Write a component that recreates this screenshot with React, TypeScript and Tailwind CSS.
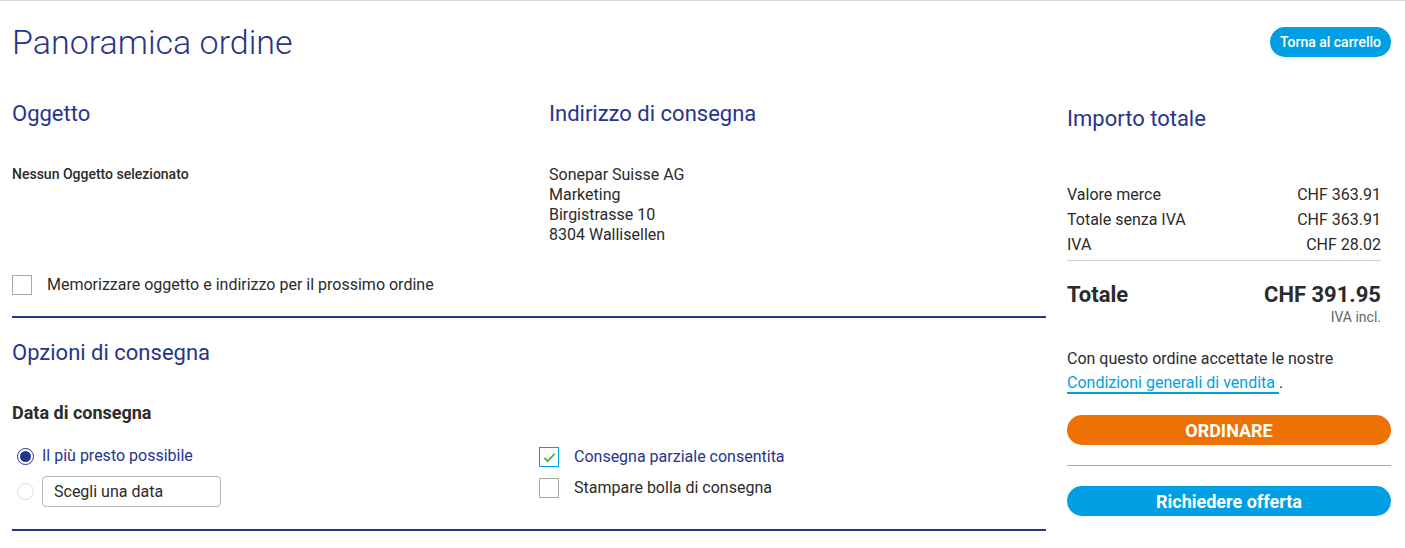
import React from "react";

const navy = "text-[#27348b]";

function Check({ checked, active }: { checked?: boolean; active?: boolean }) {
	return (
		<span
			className={`flex h-5 w-5 shrink-0 items-center justify-center border bg-white ${
				active ? "border-[#009fe3]" : "border-[#a8a8a8]"
			}`}>
			{checked && (
				<svg viewBox="0 0 16 16" className="h-[15px] w-[15px]" fill="none" stroke="#3aa935" strokeWidth="1.8">
					<path d="M2.5 8.5l3.5 3.5 7.5-8" />
				</svg>
			)}
		</span>
	);
}

function Radio({ checked }: { checked?: boolean }) {
	return (
		<span
			className={`flex h-[17px] w-[17px] shrink-0 items-center justify-center rounded-full border bg-white ${
				checked ? "border-[#27348b]" : "border-[#dcdcdc]"
			}`}>
			{checked && <span className="h-[11px] w-[11px] rounded-full bg-[#27348b]" />}
		</span>
	);
}

export default function App() {
	return (
		<div className="min-h-[548px] w-full border-t border-[#d9d9d9] bg-white pl-3 pr-[14px] font-['Roboto',sans-serif] text-[#2b2b2b]">
			<div className="flex items-start justify-between pt-[20px]">
				<h1 className={`text-[34px] font-light leading-[42px] ${navy}`}>Panoramica ordine</h1>
				<button className="mt-[6px] h-[30px] rounded-full bg-[#009fe3] px-[10px] text-[14px] font-medium text-white">
					Torna al carrello
				</button>
			</div>

			<div className="flex gap-[21px]">
				<div className="flex-1">
					<div className="grid grid-cols-2 gap-x-10 pt-[36px]">
						<div>
							<h2 className={`text-[22px] leading-[30px] ${navy}`}>Oggetto</h2>
							<p className="mt-[36px] text-[14px] font-medium leading-[18px]">Nessun Oggetto selezionato</p>
						</div>
						<div>
							<h2 className={`text-[22px] leading-[30px] ${navy}`}>Indirizzo di consegna</h2>
							<div className="mt-[36px] text-[16px] leading-[20px]">
								<p>Sonepar Suisse AG</p>
								<p>Marketing</p>
								<p>Birgistrasse 10</p>
								<p>8304 Wallisellen</p>
							</div>
						</div>
					</div>
					<label className="mt-[28px] flex items-center gap-[15px] text-[16px]">
						<Check />
						<span>Memorizzare oggetto e indirizzo per il prossimo ordine</span>
					</label>
					<div className="mt-[19px] h-[2px] bg-[#27348b]" />

					<h2 className={`mt-[20px] text-[22px] leading-[30px] ${navy}`}>Opzioni di consegna</h2>
					<h3 className="mt-[33px] text-[18px] font-bold leading-[24px]">Data di consegna</h3>
					<div className="mt-[19px] flex">
						<div className="w-[527px]">
							<div className="flex items-center gap-2 pl-[5px]">
								<Radio checked />
								<span className={`text-[16px] ${navy}`}>Il più presto possibile</span>
							</div>
							<div className="mt-[8px] flex items-center gap-2 pl-[5px]">
								<Radio />
								<input
									readOnly
									value="Scegli una data"
									className="h-[31px] w-[179px] rounded border border-[#b5b5b5] px-[11px] text-[16px] text-[#2b2b2b] outline-none"
								/>
							</div>
						</div>
						<div className="pt-[1px]">
							<label className="flex items-center gap-[15px] text-[16px]">
								<Check checked active />
								<span className={navy}>Consegna parziale consentita</span>
							</label>
							<label className="mt-[7px] flex items-center gap-[15px] text-[16px]">
								<Check />
								<span>Stampare bolla di consegna</span>
							</label>
						</div>
					</div>
					<div className="mt-[22px] h-[2px] bg-[#27348b]" />
				</div>

				<div className="w-[324px] shrink-0 pt-[41px]">
					<div className="pr-[10px]">
						<h2 className={`text-[22px] leading-[30px] ${navy}`}>Importo totale</h2>
						<div className="mt-[48px] text-[16px] leading-[25px]">
							<div className="flex justify-between">
								<span>Valore merce</span>
								<span>CHF 363.91</span>
							</div>
							<div className="flex justify-between">
								<span>Totale senza IVA</span>
								<span>CHF 363.91</span>
							</div>
							<div className="flex justify-between">
								<span>IVA</span>
								<span>CHF 28.02</span>
							</div>
						</div>
						<div className="mt-[3px] h-px bg-[#d0d0d0]" />
						<div className="mt-[20px] flex justify-between text-[22px] font-bold leading-[28px]">
							<span>Totale</span>
							<span>CHF 391.95</span>
						</div>
						<p className="text-right text-[14px] leading-[16px] text-[#666]">IVA incl.</p>
						<p className="mt-[22px] text-[16px] leading-[24px]">
							Con questo ordine accettate le nostre
							<br />
							<a className="border-b-2 border-[#009fe3] text-[#009fe3]">Condizioni generali di vendita </a> .
						</p>
					</div>
					<button className="mt-[20px] h-[30px] w-full rounded-full bg-[#ee7203] text-[18px] font-bold text-white">
						ORDINARE
					</button>
					<div className="mt-[20px] h-px bg-[#a9a9a9]" />
					<button className="mt-[20px] h-[30px] w-full rounded-full bg-[#009fe3] text-[18px] font-bold text-white">
						Richiedere offerta
					</button>
				</div>
			</div>
		</div>
	);
}
